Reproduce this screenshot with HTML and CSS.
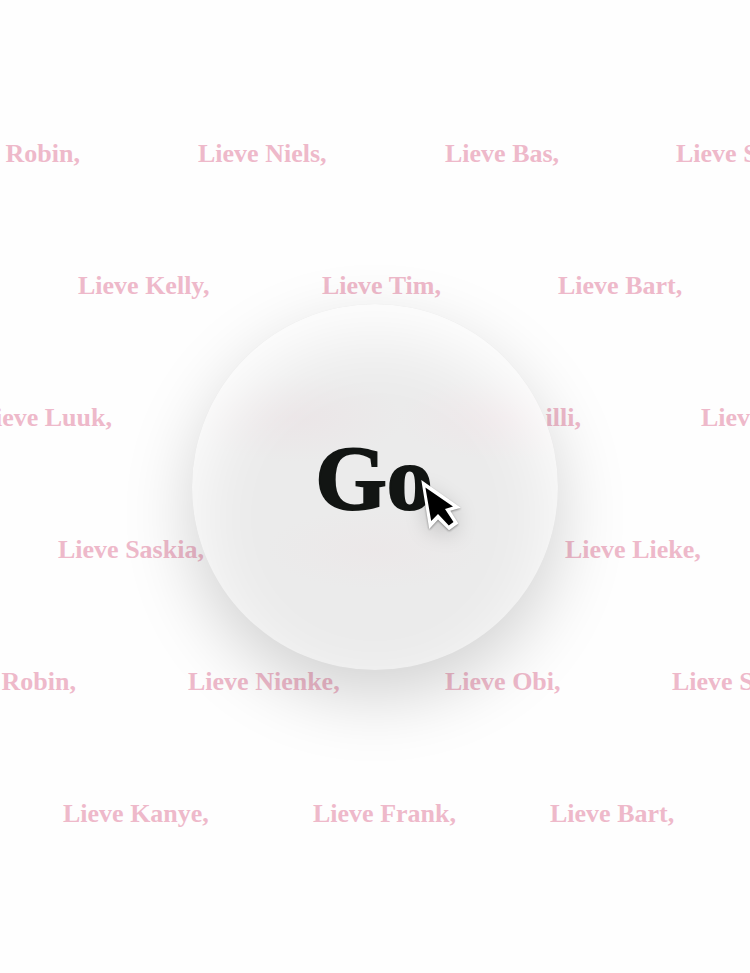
FILE: index.html
```html
<!DOCTYPE html>
<html lang="nl">
<head>
<meta charset="utf-8">
<meta name="viewport" content="width=device-width, initial-scale=1">
<title>Go</title>
<link rel="stylesheet" href="styles.css">
</head>
<body>
<main class="stage">
  <div class="names">
    <div class="row row-a"><span class="lead">Lieve Robin,</span><span>Lieve Niels,</span><span>Lieve Bas,</span><span>Lieve S</span></div>
    <div class="row row-b"><span>Lieve Kelly,</span><span>Lieve Tim,</span><span>Lieve Bart,</span></div>
    <div class="row row-c"><span class="lead">Lieve Luuk,</span><span class="lead">Lieve Lilli,</span><span>Lieve</span></div>
    <div class="row row-d"><span>Lieve Saskia,</span><span>Lieve Lieke,</span></div>
    <div class="row row-e"><span class="lead">Lieve Robin,</span><span>Lieve Nienke,</span><span>Lieve Obi,</span><span>Lieve S</span></div>
    <div class="row row-f"><span>Lieve Kanye,</span><span>Lieve Frank,</span><span>Lieve Bart,</span></div>
  </div>
  <button class="go" type="button">
    Go
    <svg class="pointer" width="56" height="68" viewBox="0 0 56 68" aria-hidden="true">
      <path fill="#fff" d="M7.3 6 L46.8 33.8 L36.3 36.8 L44.3 49.5 L35 56.3 L24 45.5 L15.2 55 Z"/>
      <path fill="#000" d="M11.4 13.5 L39 32.6 L31 35 L39.5 48 L34.8 51.5 L24 40 L17.2 47 Z"/>
    </svg>
  </button>
</main>
</body>
</html>
```

FILE: styles.css
```css
* {
  box-sizing: border-box;
}

body {
  margin: 0;
  background: #fefefe;
  font-family: "Liberation Serif", "Times New Roman", serif;
  font-weight: 700;
}

.stage {
  display: grid;
  place-items: center;
  min-height: 100vh;
  overflow: hidden;
}

.names,
.go {
  grid-area: 1 / 1;
}

.names {
  width: 100%;
  color: #eeb9ca;
  font-size: 26px;
  line-height: 132px;
  white-space: nowrap;
  padding-bottom: 6px;
}

.row {
  display: grid;
}

/* Column starts differ per row so that the names stay staggered. */
.row-a {
  grid-template-columns: minmax(0, 198fr) minmax(0, 247fr) minmax(0, 231fr) minmax(0, 74fr);
}

.row-b {
  grid-template-columns: minmax(0, 244fr) minmax(0, 236fr) minmax(0, 192fr);
  padding-left: 78px;
}

.row-c {
  grid-template-columns: minmax(0, 232fr) minmax(0, 469fr) minmax(0, 49fr);
}

.row-d {
  grid-template-columns: minmax(0, 507fr) minmax(0, 185fr);
  padding-left: 58px;
}

.row-e {
  grid-template-columns: minmax(0, 188fr) minmax(0, 257fr) minmax(0, 227fr) minmax(0, 78fr);
}

.row-f {
  grid-template-columns: minmax(0, 250fr) minmax(0, 237fr) minmax(0, 200fr);
  padding-left: 63px;
}

.lead {
  justify-self: end;
  padding-right: 120px;
}

.row-a .lead {
  padding-right: 118px;
}

.row-e .lead {
  padding-right: 112px;
}

.go {
  position: relative;
  width: 366px;
  height: 366px;
  padding: 0 2px 18px 0;
  border: 0;
  border-radius: 50%;
  color: #121513;
  font: inherit;
  font-size: 92px;
  -webkit-text-stroke: 2px #121513;
  line-height: 104px;
  background:
    radial-gradient(ellipse 110px 44px at 28% 31%, rgba(236, 208, 216, 0.2), transparent),
    radial-gradient(ellipse 110px 44px at 86% 31%, rgba(250, 214, 224, 0.22), transparent),
    radial-gradient(ellipse 110px 40px at 50% 67%, rgba(240, 214, 218, 0.14), transparent),
    #ebebeb;
  box-shadow:
    0 26px 70px rgba(0, 0, 0, 0.18),
    inset 0 30px 70px #fff;
}

.pointer {
  position: absolute;
  left: 222px;
  top: 170px;
  filter: drop-shadow(0 1px 1px rgba(0, 0, 0, 0.4)) drop-shadow(0 6px 10px rgba(0, 0, 0, 0.16));
}
```
